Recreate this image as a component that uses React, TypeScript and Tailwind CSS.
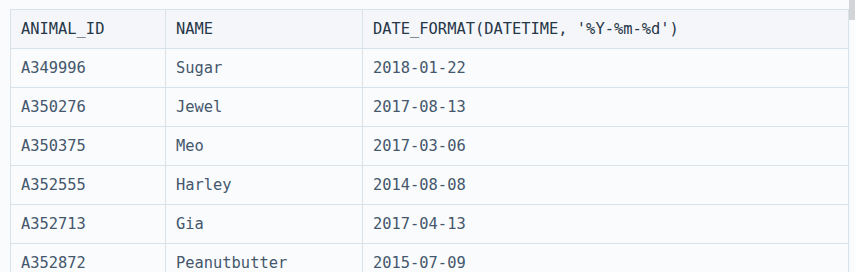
const rows = [
  ["A349996", "Sugar", "2018-01-22"],
  ["A350276", "Jewel", "2017-08-13"],
  ["A350375", "Meo", "2017-03-06"],
  ["A352555", "Harley", "2014-08-08"],
  ["A352713", "Gia", "2017-04-13"],
  ["A352872", "Peanutbutter", "2015-07-09"],
];

const headers = ["ANIMAL_ID", "NAME", "DATE_FORMAT(DATETIME, '%Y-%m-%d')"];

export default function App() {
  return (
    <div className="relative h-[272px] w-[855px] overflow-hidden bg-[#fafbfd] pl-[10px] pt-[9px] font-['DejaVu_Sans_Mono',monospace] text-[15.4px]">
      <div className="grid w-[839px] grid-cols-[155px_197px_486px] border-l border-t border-[#d7e2eb]">
        {headers.map((h) => (
          <div
            key={h}
            className="flex h-[39px] items-center whitespace-pre border-b border-r border-[#d7e2eb] bg-[#f5f6fa] pl-[10px] pt-[2px] text-[#263747]"
          >
            {h}
          </div>
        ))}
        {rows.map((r) =>
          r.map((c, i) => (
            <div
              key={r[0] + i}
              className="flex h-[39px] items-center border-b border-r border-[#d7e2eb] bg-[#fafbfd] pl-[10px] pt-[2px] text-[#44576c]"
            >
              {c}
            </div>
          ))
        )}
      </div>
      {/* scrollbar thumb */}
      <div className="absolute right-0 top-0 h-[20px] w-[6px] bg-[#d3d4d8]" />
    </div>
  );
}
